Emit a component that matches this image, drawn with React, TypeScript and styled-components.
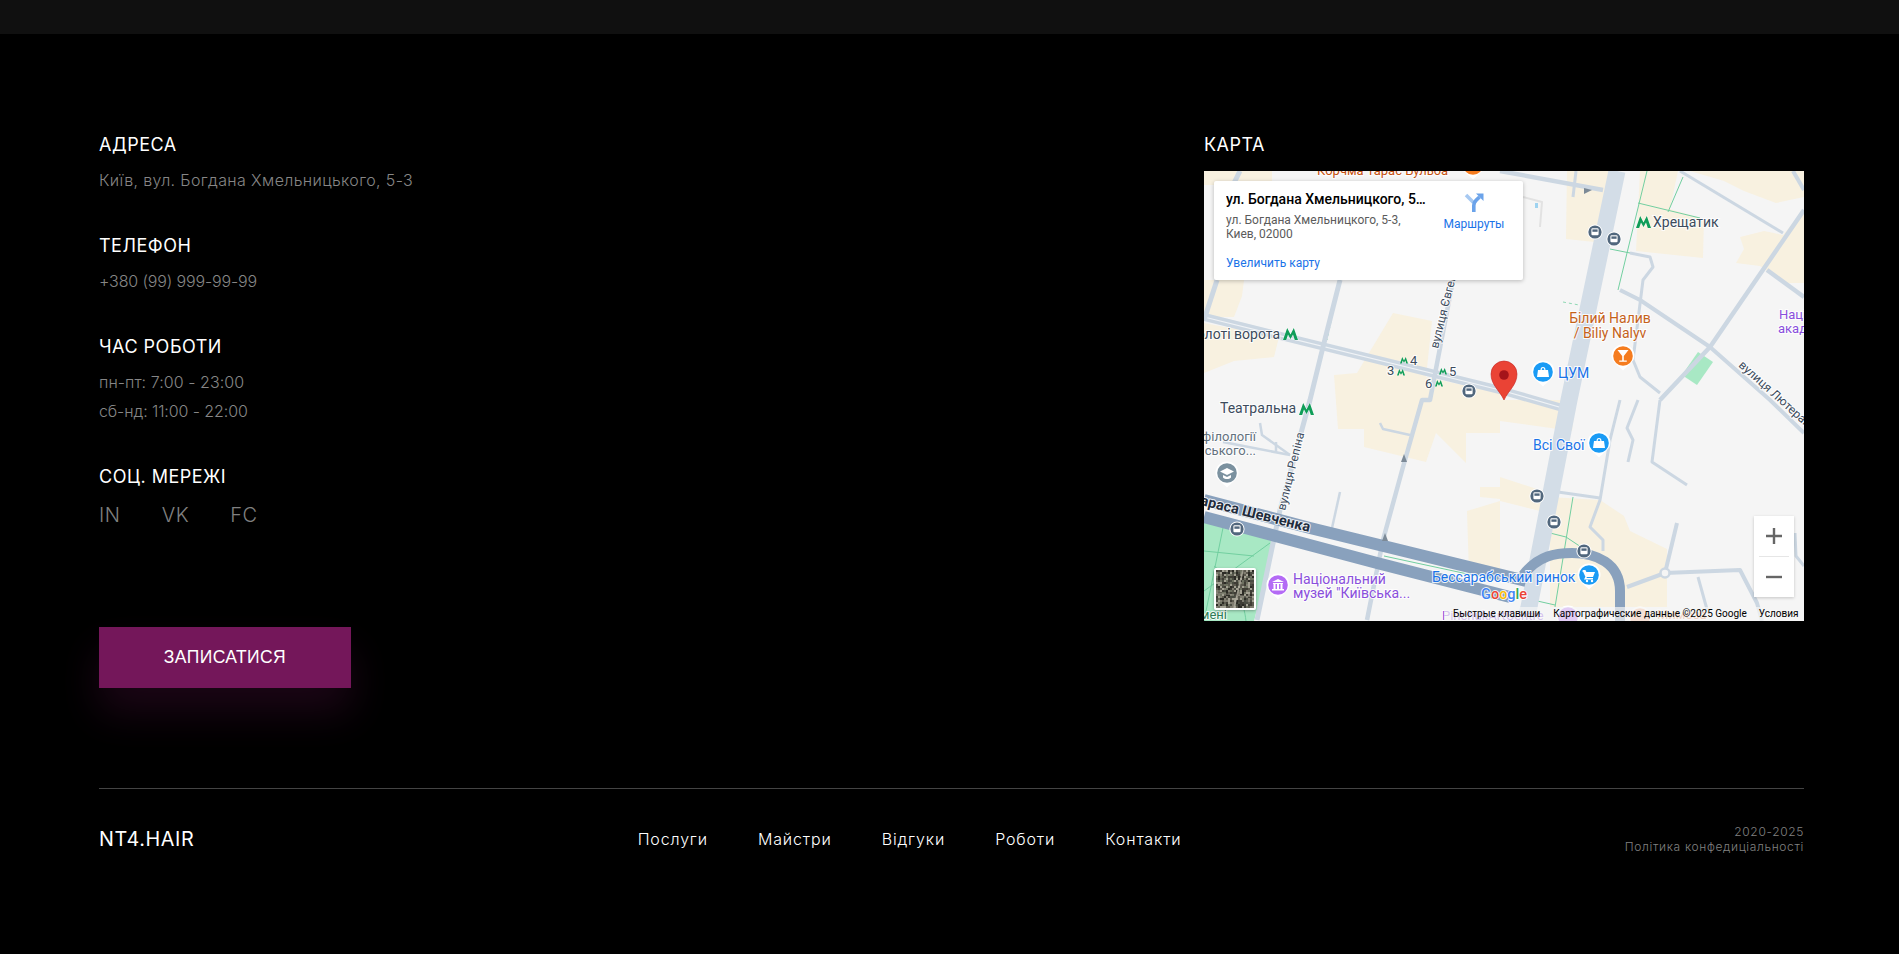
import { createGlobalStyle } from 'styled-components'
import styled from 'styled-components'

const GlobalStyle = createGlobalStyle`
    html, body {
        margin: 0;
        padding: 0;
        background: #000;
    }
    body {
        font-family: Inter, "Open Sans", sans-serif;
        color: #fff;
    }
`

const Page = styled.div`
    width: 100%;
    height: 954px;
    overflow: hidden;
    background: #000;
`

const TopBar = styled.div`
    height: 34px;
    background: #101010;
`

const Container = styled.div`
    padding: 100px 95px 0 99px;
`

const Columns = styled.div`
    display: flex;
    justify-content: space-between;
    align-items: flex-start;
`

const Group = styled.div`
    margin-bottom: 40px;
`

const Heading = styled.h3<{ $gap?: number }>`
    margin: 0 0 ${(p) => p.$gap ?? 10}px 0;
    font-size: 18px;
    line-height: 22px;
    font-weight: 400;
    letter-spacing: 0.5px;
    color: #fff;
`

const Text = styled.div<{ $tracking: number }>`
    font-size: 16px;
    line-height: 29px;
    font-weight: 300;
    letter-spacing: ${(p) => p.$tracking}px;
    color: #868686;
`

const Socials = styled.div`
    display: flex;
    gap: 41px;
    margin-top: 13px;
`

const Social = styled.a`
    font-size: 20px;
    line-height: 29px;
    font-weight: 300;
    letter-spacing: 0.6px;
    color: #808080;
`

const BookButton = styled.button`
    display: block;
    width: 252px;
    height: 61px;
    margin-top: 97px;
    border: 0;
    background: #74175a;
    color: #fff;
    font-family: "Liberation Sans", sans-serif;
    font-size: 17.5px;
    letter-spacing: 0.4px;
    box-shadow: 0 24px 40px rgba(116, 23, 90, 0.24);
`

const MapColumn = styled.div`
    width: 600px;
`

const MapFrame = styled.div`
    position: relative;
    width: 600px;
    height: 450px;
    overflow: hidden;
    background: #f5f5f5;
    font-family: Roboto, sans-serif;

    svg.map {
        display: block;
    }
`

const InfoWindow = styled.div`
    position: absolute;
    left: 10px;
    top: 10px;
    width: 309px;
    height: 99px;
    box-sizing: border-box;
    padding: 9px 12px;
    display: flex;
    justify-content: space-between;
    background: #fff;
    border-radius: 2px;
    box-shadow: 0 1px 4px rgba(0, 0, 0, 0.25);
`

const InfoBody = styled.div`
    width: 202px;
`

const InfoTitle = styled.div`
    font-size: 14px;
    line-height: 18px;
    font-weight: 500;
    color: #000;
    white-space: nowrap;
    overflow: hidden;
    text-overflow: ellipsis;
`

const InfoAddress = styled.div`
    margin-top: 5px;
    font-size: 12px;
    line-height: 14px;
    color: #5b5b5b;
`

const MapLink = styled.a`
    display: block;
    margin-top: 15px;
    font-size: 12px;
    line-height: 14px;
    color: #1a73e8;
`

const Directions = styled.div`
    width: 64px;
    margin-right: 5px;
    padding-top: 2px;
    display: flex;
    flex-direction: column;
    align-items: center;
    font-size: 12px;
    line-height: 14px;
    color: #1a73e8;

    span {
        margin-top: 5px;
    }
`

const ZoomBox = styled.div`
    position: absolute;
    left: 550px;
    top: 345px;
    width: 40px;
    height: 81px;
    display: flex;
    flex-direction: column;
    align-items: center;
    background: #fff;
    box-shadow: 0 1px 3px rgba(0, 0, 0, 0.2);
`

const ZoomButton = styled.div`
    height: 40px;
    display: flex;
    align-items: center;
    justify-content: center;
`

const ZoomDivider = styled.div`
    width: 30px;
    height: 1px;
    background: #e6e6e6;
`

const Attribution = styled.div`
    position: absolute;
    right: 0;
    bottom: 0;
    width: 360px;
    height: 14px;
    display: flex;
    font-size: 10px;
    line-height: 14px;
    color: #000;
    background: rgba(245, 245, 245, 0.7);
    white-space: nowrap;
`

const AttributionItem = styled.span<{ $left: number }>`
    margin-left: ${(p) => p.$left}px;
`

const Thumb = styled.div`
    position: absolute;
    left: 10px;
    top: 397px;
    width: 38px;
    height: 38px;
    border: 2px solid #fff;
    border-radius: 2px;
    overflow: hidden;
    box-shadow: 0 1px 3px rgba(0, 0, 0, 0.3);

    svg {
        display: block;
    }
`

const Footer = styled.footer`
    margin-top: 100px;
    border-top: 1px solid #444;
    display: flex;
    justify-content: space-between;
    align-items: center;
    height: 100px;
`

const Logo = styled.div`
    font-size: 19.8px;
    letter-spacing: 0.6px;
    color: #fff;
`

const Nav = styled.nav`
    display: flex;
    gap: 50px;
`

const NavLink = styled.a`
    font-size: 16px;
    letter-spacing: 0.85px;
    color: #fff;
    font-weight: 300;
`

const Legal = styled.div`
    text-align: right;
    font-size: 12px;
    line-height: 15px;
    font-weight: 300;
    letter-spacing: 0.65px;
    color: #808080;
`

const MapLabel = styled.text<{ $color?: string; $size?: number; $weight?: number }>`
    font-family: Roboto, sans-serif;
    font-size: ${(p) => p.$size || 13}px;
    font-weight: ${(p) => p.$weight || 400};
    fill: ${(p) => p.$color || '#3c4b5c'};
    paint-order: stroke;
    stroke: rgba(255, 255, 255, 0.85);
    stroke-width: 2px;
`

const buildings = [
    '0,0 68,0 68,14 0,14',
    '0,109 40,109 38,125 30,146 0,146',
    '0,152 75,166 70,186 30,190 0,202',
    '189,142 228,150 222,206 296,222 296,262 262,262 262,292 232,262 222,291 160,276 160,258 134,258 130,204 153,202',
    '276,316 296,316 296,328 276,326',
    '263,340 296,330 296,402 265,402',
    '296,229 372,229 368,260 296,250',
    '296,306 339,320 336,340 296,330',
    '346,326 396,329 420,345 426,360 463,378 463,436 346,436',
    '363,0 406,0 400,72 362,68',
    '436,0 474,0 466,38 500,48 499,87 432,80',
    '486,0 600,0 600,26 572,32 540,20 520,10',
    '536,66 560,60 579,64 592,48 600,40 600,112 580,112 556,95 532,92 540,78',
]

const roads: [string, number, string][] = [
    ['0,146 296,219 362,238', 8, '#ccd7e2'],
    ['0,146 296,219 362,238', 1.2, '#f0f3f6'],
    ['249,109 226,229 218,229 199,296 179,369 163,449', 4.5, '#ccd7e2'],
    ['136,109 119,176 106,229 76,339 53,449', 5, '#ccd7e2'],
    ['13,109 0,149', 5, '#ccd7e2'],
    ['36,0 30,12', 5, '#ccd7e2'],
    ['296,0 399,19', 4.5, '#ccd7e2'],
    ['372,0 369,26', 3, '#ccd7e2'],
    ['319,26 338,31 336,56', 2, '#e2e2e2'],
    ['476,0 579,62', 3, '#ccd7e2'],
    ['600,39 506,176 456,229', 4.5, '#ccd7e2'],
    ['563,99 600,126', 4.5, '#ccd7e2'],
    ['416,119 436,129 506,176 566,229 600,262', 4, '#ccd7e2'],
    ['589,0 600,19', 4, '#ccd7e2'],
    ['426,82 446,86 449,96 439,109 429,189 436,206 456,222', 3, '#ccd7e2'],
    ['456,229 448,291 483,314', 3, '#ccd7e2'],
    ['434,229 423,257 429,269 424,291', 3, '#ccd7e2'],
    ['473,352 461,402', 4, '#ccd7e2'],
    ['423,416 461,402 536,399 553,432 558,450', 4, '#ccd7e2'],
    ['494,406 504,442', 3, '#ccd7e2'],
    ['591,362 592,385 600,395', 3, '#ccd7e2'],
    ['416,229 406,269 396,329 386,356 399,369 399,380', 3, '#ccd7e2'],
    ['354,321 396,327', 3, '#ccd7e2'],
    ['56,252 58,264 86,284', 2.5, '#ccd7e2'],
    ['19,271 86,284', 2.5, '#ccd7e2'],
    ['72,271 72,282', 2.5, '#ccd7e2'],
    ['136,321 128,357', 2.5, '#ccd7e2'],
    ['176,252 179,258 206,264', 2.5, '#ccd7e2'],
    ['413,0 365,229 325,436 321,450', 17, '#d3dde7'],
    ['0,329 106,357 306,406 322,410', 12, '#89a1bd'],
    ['0,346 173,392 306,426', 12, '#89a1bd'],
]

const greenLines = [
    '443,0 414,119',
    '434,32 496,47',
    '479,6 464,41',
    '406,78 446,86',
    '369,326 351,436',
    '346,362 362,366 380,378',
    '329,429 351,434',
    '180,385 296,410',
]

const buses: [number, number][] = [[265, 220], [391, 61], [410, 68], [33, 358], [333, 325], [350, 351], [380, 380]]

const Metro = ({ x, y, w = 15 }: { x: number; y: number; w?: number }) => (
    <g transform={`translate(${x} ${y}) scale(${w / 15})`}>
        <path d="M0 12 L4.2 0 L7.5 6.4 L10.8 0 L15 12 L11.8 12 L10 6.6 L7.5 11 L5 6.6 L3.2 12 Z" fill="#0f9d58" stroke="#fff" strokeWidth="0.6" paintOrder="stroke" />
    </g>
)

const Pin = ({ x, y, color, children }: { x: number; y: number; color: string; children?: React.ReactNode }) => (
    <g transform={`translate(${x} ${y})`}>
        <path d="M-11.5 0 A11.5 11.5 0 1 1 11.5 0 C11.5 6 4 10 0 14.5 C-4 10 -11.5 6 -11.5 0 Z" fill="#fff" />
        <circle r="9.8" fill={color} />
        <g fill="#fff">{children}</g>
    </g>
)

const Bus = ({ x, y }: { x: number; y: number }) => (
    <g transform={`translate(${x} ${y})`}>
        <circle r="7.6" fill="#fff" />
        <circle r="6.6" fill="#51677d" />
        <rect x="-3.6" y="-3.8" width="7.2" height="7" rx="1.2" fill="#fff" />
        <rect x="-2.6" y="-2.6" width="5.2" height="2.4" fill="#51677d" />
    </g>
)

const MapDrawing = () => (
    <svg className="map" width="600" height="450" viewBox="0 0 600 450">
        <rect width="600" height="450" fill="#f5f5f5" />
        {buildings.map((b) => <polygon key={b} points={b} fill="#f8f1e0" />)}
        <polygon points="0,346 72,366 50,450 0,450" fill="#a8e8c4" />
        <polygon points="494,181 509,191 493,214 478,204" fill="#a8e8c4" />
        <path d="M0 380 L50 385 M0 420 L66 372 M20 352 L0 450 M10 395 C30 410 40 430 42 450" stroke="#72cfa0" strokeWidth="1" fill="none" />
        {greenLines.map((l) => <polyline key={l} points={l} fill="none" stroke="#72cfa0" strokeWidth="1" />)}
        <polyline points="136,109 123,169" fill="none" stroke="#8fd8b4" strokeWidth="1" strokeDasharray="3 3" />
        <polyline points="359,131 375,134" fill="none" stroke="#8fd8b4" strokeWidth="1" strokeDasharray="3 3" />
        {roads.map(([p, w, c]) => <polyline key={p + w} points={p} fill="none" stroke={c} strokeWidth={w} strokeLinejoin="round" />)}
        <path d="M319 404 C335 384 352 382 368 382 C392 382 416 392 416 420 L416 450" fill="none" stroke="#89a1bd" strokeWidth="10" />
        <circle cx="461" cy="402" r="4.5" fill="#f5f5f5" stroke="#ccd7e2" strokeWidth="2.5" />
        <path d="M197 291 l3 -8 l3 8 z M178 370 l3 -8 l3 8 z M380 17 l8 2 l-8 4 z" fill="#7c8a97" />
        <rect x="331" y="32" width="3" height="5" fill="#9fd3f0" />

        <MapLabel x="113" y="4" $color="#c5500e">Корчма Тарас Бульба</MapLabel>
        <Pin x={269} y={-6} color="#f57c1f" />

        <MapLabel x="76" y="168" textAnchor="end" $size={14}>Золоті ворота</MapLabel>
        <Metro x={79} y={157} />
        <Metro x={196} y={186} w={8} />
        <MapLabel x="206" y="194" $size={13}>4</MapLabel>
        <MapLabel x="183" y="204" $size={13}>3</MapLabel>
        <Metro x={193} y={198} w={8} />
        <Metro x={235} y={197} w={8} />
        <MapLabel x="245" y="205" $size={13}>5</MapLabel>
        <MapLabel x="221" y="217" $size={13}>6</MapLabel>
        <Metro x={231} y={209} w={8} />

        <MapLabel x="449" y="56" $size={14}>Хрещатик</MapLabel>
        <Metro x={432} y={45} />
        <MapLabel x="406" y="152" textAnchor="middle" $color="#c5621a" $size={14}>Білий Налив</MapLabel>
        <MapLabel x="406" y="167" textAnchor="middle" $color="#c5621a" $size={14}>/ Biliy Nalyv</MapLabel>
        <MapLabel x="575" y="148" $color="#8a4fdc">Національна</MapLabel>
        <MapLabel x="574" y="162" $color="#8a4fdc">академія</MapLabel>
        <MapLabel x="534" y="195" transform="rotate(42 534 195)" $size={12}>вулиця Лютеранська</MapLabel>
        <MapLabel x="234" y="178" transform="rotate(-76 234 178)" $size={12}>вулиця Євгена</MapLabel>
        <MapLabel x="16" y="242" $size={14}>Театральна</MapLabel>
        <Metro x={95} y={232} />
        <MapLabel x="81" y="340" transform="rotate(-76 81 340)" $size={12}>вулиця Репіна</MapLabel>
        <MapLabel x="52" y="270" textAnchor="end" $color="#63717d">філології</MapLabel>
        <MapLabel x="52" y="284" textAnchor="end" $color="#63717d">ського...</MapLabel>
        <MapLabel x="105" y="361" textAnchor="end" transform="rotate(14 105 361)" $color="#1f2c3d" $weight={700} $size={14.5}>Тараса Шевченка</MapLabel>
        <MapLabel x="89" y="413" $color="#8a4fdc" $size={14}>Національний</MapLabel>
        <MapLabel x="89" y="427" $color="#8a4fdc" $size={14}>музей "Київська...</MapLabel>
        <MapLabel x="23" y="448" textAnchor="end" $color="#2f7d57">імені</MapLabel>
        <MapLabel x="228" y="411" $color="#1a73e8" $size={14}>Бессарабський ринок</MapLabel>
        <MapLabel x="329" y="279" $color="#1a73e8" $size={14}>Всі Свої</MapLabel>
        <MapLabel x="354" y="207" $color="#1a73e8" $size={14}>ЦУМ</MapLabel>
        <MapLabel x="453" y="448" $color="#e8844a" $size={13}>Мимоза</MapLabel>
        <MapLabel x="238" y="449" $color="#8a4fdc" $size={13}>PinchukArtCentre</MapLabel>

        <Pin x={339} y={201} color="#1a9bf5">
            <path d="M-5 -2 h10 l1 7 h-12 z M-2.5 -2 a2.5 3 0 0 1 5 0 h-1.2 a1.3 2 0 0 0 -2.6 0 z" />
        </Pin>
        <Pin x={395} y={272} color="#1a9bf5">
            <path d="M-5 -2 h10 l1 7 h-12 z M-2.5 -2 a2.5 3 0 0 1 5 0 h-1.2 a1.3 2 0 0 0 -2.6 0 z" />
        </Pin>
        <Pin x={385} y={404} color="#1a9bf5">
            <path d="M-6 -5 h2.4 l1 2 h8.6 l-2 5 h-6 l-.6 1 h6.6 v1.4 h-9 l1.4 -2.6 l-2.4 -5.4 h-1 z" />
            <circle cx="-2" cy="6" r="1.2" />
            <circle cx="3" cy="6" r="1.2" />
        </Pin>
        <Pin x={419} y={185} color="#f57c1f">
            <path d="M-5.5 -6 h11 l-4.7 6 v4.4 h3 v1.4 h-7.6 v-1.4 h3 v-4.4 z" />
        </Pin>
        <Pin x={23} y={302} color="#7b919f">
            <path d="M0 -5 l7 3.5 l-7 3.5 l-7 -3.5 z M-4 2 v2.4 c2 2 6 2 8 0 v-2.4 l-4 2 z" />
        </Pin>
        <Pin x={74} y={414} color="#b46bf5">
            <path d="M-6 -3 L0 -6 L6 -3 Z M-5 -2 h10 v1 h-10 z M-4.5 -1 h2 v5 h-2 z M2.5 -1 h2 v5 h-2 z M-1 -1 h2 v5 h-2 z M-6 4 h12 v1.6 h-12 z" />
        </Pin>
        <Pin x={364} y={446} color="#b46bf5" />
        <Pin x={436} y={447} color="#f6b089" />

        {buses.map(([x, y]) => <Bus key={x} x={x} y={y} />)}

        <path d="M300 229 C296 220 287 214 287 203 A13 13 0 0 1 313 203 C313 214 304 220 300 229 Z" fill="#ea4335" stroke="#c5221f" strokeWidth="0.6" />
        <circle cx="300" cy="204" r="4.8" fill="#a5141a" />

        <text x="277" y="428" fontFamily="Roboto, sans-serif" fontSize="14.5" fontWeight="500" stroke="#fff" strokeWidth="1.5" paintOrder="stroke">
            <tspan fill="#4285f4">G</tspan>
            <tspan fill="#ea4335">o</tspan>
            <tspan fill="#fbbc05">o</tspan>
            <tspan fill="#4285f4">g</tspan>
            <tspan fill="#34a853">l</tspan>
            <tspan fill="#ea4335">e</tspan>
        </text>
    </svg>
)

const DirectionsIcon = () => (
    <svg width="20" height="20" viewBox="0 0 20 20">
        <path d="M2 3 L9.5 10.5" stroke="#a7c9f2" strokeWidth="3.6" fill="none" />
        <path d="M9.8 20 V13.5 Q9.8 10.5 12 8.4 L15.5 5" stroke="#6ba3ea" strokeWidth="3.6" fill="none" />
        <path d="M12 1.5 H19.5 V9 Z" fill="#6ba3ea" />
    </svg>
)

const thumbTones = ['#3f3d35', '#5c5a4f', '#807d70', '#a3a092', '#2c2b25', '#6d7060', '#4a4c42']

// mottled aerial photo look, seeded so that it is the same on every render
const thumbCells = Array.from({ length: 361 }, (_, i) => {
    const noise = Math.abs(Math.sin(i * 12.9898) * 43758.5453) % 1
    return thumbTones[Math.floor(noise * thumbTones.length)]
})

const SatelliteThumb = () => (
    <svg width="38" height="38" viewBox="0 0 38 38">
        {thumbCells.map((tone, i) => (
            <rect key={i} x={(i % 19) * 2} y={Math.floor(i / 19) * 2} width="2" height="2" fill={tone} />
        ))}
        <path d="M27 0 L18 38" stroke="#b0ad9f" strokeWidth="1.6" opacity="0.8" />
        <path d="M0 23 L38 27" stroke="#9a978a" strokeWidth="1" opacity="0.6" />
    </svg>
)

const App = () => {
    return (
        <Page>
            <GlobalStyle />
            <TopBar />
            <Container>
                <Columns>
                    <div>
                        <Group>
                            <Heading>АДРЕСА</Heading>
                            <Text $tracking={0.37}>Київ, вул. Богдана Хмельницького, 5-3</Text>
                        </Group>
                        <Group>
                            <Heading>ТЕЛЕФОН</Heading>
                            <Text $tracking={-0.15}>+380 (99) 999-99-99</Text>
                        </Group>
                        <Group>
                            <Heading>ЧАС РОБОТИ</Heading>
                            <Text $tracking={0.05}>пн-пт: 7:00 - 23:00</Text>
                            <Text $tracking={-0.1}>сб-нд: 11:00 - 22:00</Text>
                        </Group>
                        <Group>
                            <Heading>СОЦ. МЕРЕЖІ</Heading>
                            <Socials>
                                <Social>IN</Social>
                                <Social>VK</Social>
                                <Social>FC</Social>
                            </Socials>
                        </Group>
                        <BookButton>ЗАПИСАТИСЯ</BookButton>
                    </div>
                    <MapColumn>
                        <Heading $gap={15}>КАРТА</Heading>
                        <MapFrame>
                            <MapDrawing />
                            <InfoWindow>
                                <InfoBody>
                                    <InfoTitle>ул. Богдана Хмельницкого, 5-3</InfoTitle>
                                    <InfoAddress>ул. Богдана Хмельницкого, 5-3,<br />Киев, 02000</InfoAddress>
                                    <MapLink>Увеличить карту</MapLink>
                                </InfoBody>
                                <Directions>
                                    <DirectionsIcon />
                                    <span>Маршруты</span>
                                </Directions>
                            </InfoWindow>
                            <Thumb><SatelliteThumb /></Thumb>
                            <ZoomBox>
                                <ZoomButton>
                                    <svg width="18" height="18" viewBox="0 0 18 18"><path d="M1 9 H17 M9 1 V17" stroke="#666" strokeWidth="2.4" /></svg>
                                </ZoomButton>
                                <ZoomDivider />
                                <ZoomButton>
                                    <svg width="18" height="18" viewBox="0 0 18 18"><path d="M1 9 H17" stroke="#666" strokeWidth="2.4" /></svg>
                                </ZoomButton>
                            </ZoomBox>
                            <Attribution>
                                <AttributionItem $left={9}>Быстрые клавиши</AttributionItem>
                                <AttributionItem $left={13}>Картографические данные ©2025 Google</AttributionItem>
                                <AttributionItem $left={12}>Условия</AttributionItem>
                            </Attribution>
                        </MapFrame>
                    </MapColumn>
                </Columns>
                <Footer>
                    <Logo>NT4.HAIR</Logo>
                    <Nav>
                        <NavLink>Послуги</NavLink>
                        <NavLink>Майстри</NavLink>
                        <NavLink>Відгуки</NavLink>
                        <NavLink>Роботи</NavLink>
                        <NavLink>Контакти</NavLink>
                    </Nav>
                    <Legal>
                        <div>2020-2025</div>
                        <div>Політика конфедиціальності</div>
                    </Legal>
                </Footer>
            </Container>
        </Page>
    )
}

export default App
